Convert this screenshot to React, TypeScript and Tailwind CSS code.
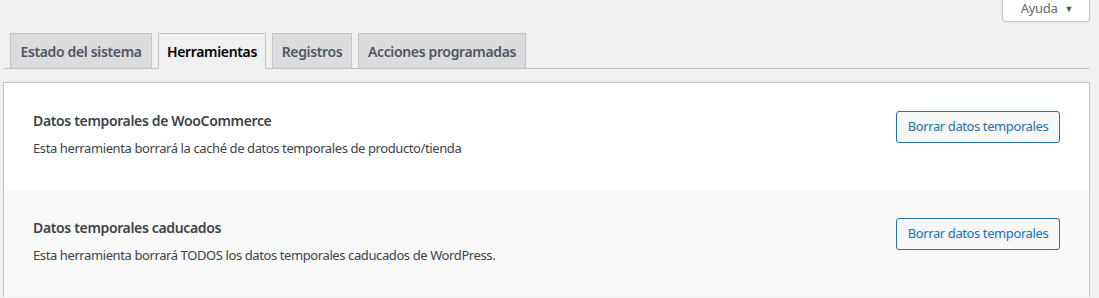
const tabs = [
   { label: 'Estado del sistema', width: 'w-[142px]' },
   { label: 'Herramientas', width: 'w-[108px]', active: true },
   { label: 'Registros', width: 'w-[80px]' },
   { label: 'Acciones programadas', width: 'w-[168px]' }
];

const tools = [
   {
      id: 'clear_transients',
      name: 'Datos temporales de WooCommerce',
      desc: 'Esta herramienta borrará la caché de datos temporales de producto/tienda',
      action: 'Borrar datos temporales'
   },
   {
      id: 'clear_expired_transients',
      name: 'Datos temporales caducados',
      desc: 'Esta herramienta borrará TODOS los datos temporales caducados de WordPress.',
      action: 'Borrar datos temporales'
   }
];

function HelpTab () {
   return (
      <div className="flex justify-end pr-[9px]">
         <button className="flex items-center gap-[7px] bg-white -mt-px pt-[1px] pr-[16px] pb-[3px] pl-[18px] border border-[#c3c4c7] border-t-0 rounded-b-[4px] h-[23px] text-[#646970] text-[13px] tracking-[-0.3px]">
            <span>Ayuda</span>
            <span className="text-[#50575e] text-[9px]">▼</span>
         </button>
      </div>
   );
}

function NavTabs () {
   return (
      <div className="flex items-end mt-[11px] ml-[3px] pl-[7px] border-[#c3c4c7] border-b w-[1087px]">
         {tabs.map((tab) => (
            <div
               key={tab.label}
               className={`${tab.width} -mb-px mr-[6px] flex justify-center items-center h-[36px] border border-[#c3c4c7] text-[14px] font-semibold tracking-[-0.35px] ${
                  tab.active
                     ? 'bg-[#f0f0f1] border-b-[#f0f0f1] text-black'
                     : 'bg-[#dcdcde] text-[#50575e]'
               }`}
            >
               {tab.label}
            </div>
         ))}
      </div>
   );
}

function ToolRow ({ tool, alt }: { tool: typeof tools[number]; alt: boolean }) {
   return (
      <div className={`flex justify-between items-start pt-[28px] pr-[29px] pb-[32px] pl-[29px] ${alt ? 'bg-[#f9f9f9]' : 'bg-white'}`}>
         <div>
            <p className="font-semibold text-[#3c434a] text-[14px] tracking-[-0.35px] leading-[20px]">{tool.name}</p>
            <p className="mt-[7px] text-[#3c434a] text-[13px] tracking-[-0.4px] leading-[20px]">{tool.desc}</p>
         </div>
         <button className="bg-[#f6f7f7] border border-[#2271b1] rounded-[3px] w-[164px] h-[32px] text-[#2271b1] text-[13px] tracking-[-0.4px]">
            {tool.action}
         </button>
      </div>
   );
}

export default function App () {
   return (
      <div className="bg-[#f0f0f1] h-[298px] overflow-hidden font-['Segoe_UI','Noto_Sans',sans-serif]">
         <HelpTab />
         <NavTabs />
         <div className="bg-white mt-[13px] ml-[3px] border border-[#c3c4c7] border-b-0 w-[1087px]">
            {tools.map((tool, i) => (
               <ToolRow key={tool.id} tool={tool} alt={i % 2 === 1} />
            ))}
         </div>
      </div>
   );
}
